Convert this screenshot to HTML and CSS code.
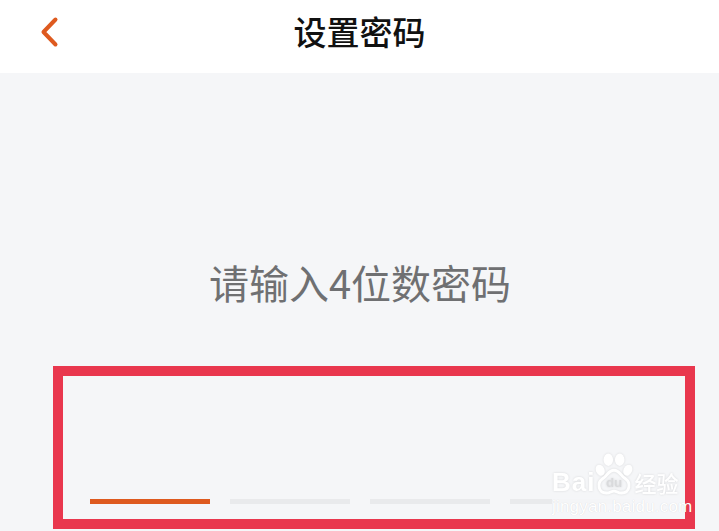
FILE: index.html
```html
<!DOCTYPE html>
<html lang="zh-CN">
<head>
    <meta charset="UTF-8">
    <meta name="viewport" content="width=device-width, initial-scale=1.0">
    <title>设置密码</title>
    <link rel="stylesheet" href="styles.css">
</head>
<body>
    <div class="header">
        <svg class="back" width="20" height="32" viewBox="0 0 20 32">
            <path d="M16.500 3.500 L4.500 16 L16.500 28.500" fill="none" stroke="#de5a1f" stroke-width="4" stroke-linecap="round" stroke-linejoin="round"/>
        </svg>
        <h1 class="title">设置密码</h1>
    </div>
    <div class="content">
        <div class="prompt">请输入4位数密码</div>
        <div class="bars">
            <div class="bar active"></div>
            <div class="bar"></div>
            <div class="bar"></div>
            <div class="bar"></div>
        </div>
    </div>
    <div class="red-box"></div>
    <div class="watermark">
        <div class="wm-logo">
            <span class="wm-bai">Bai</span>
            <svg class="wm-paw" width="38" height="42" viewBox="0 0 40 44">
                <g fill="#fff">
                    <ellipse cx="5.500" cy="18" rx="4.500" ry="6" transform="rotate(-25 5.500 18)"/>
                    <ellipse cx="14" cy="7" rx="5" ry="6.500"/>
                    <ellipse cx="26" cy="7" rx="5" ry="6.500"/>
                    <ellipse cx="34.500" cy="18" rx="4.500" ry="6" transform="rotate(25 34.500 18)"/>
                </g>
                <path d="M20 18 C14 18 13 24 8 27 C2 31 3 42 12 42 C16 42 17 40 20 40 C23 40 24 42 28 42 C37 42 38 31 32 27 C27 24 26 18 20 18 Z" fill="none" stroke="#fff" stroke-width="3"/>
                <text class="wm-du" x="20" y="36" text-anchor="middle">du</text>
            </svg>
            <span class="wm-cn">经验</span>
        </div>
        <div class="wm-url">jingyan.baidu.com</div>
    </div>
</body>
</html>
```

FILE: styles.css
```css
* {
    margin: 0;
    padding: 0;
    box-sizing: border-box;
}
html, body {
    height: 531px;
    overflow: hidden;
}
body {
    position: relative;
    background-color: #f5f6f8;
    font-family: "Noto Sans CJK SC", "Liberation Sans", sans-serif;
}
.header {
    height: 73px;
    background-color: #fff;
    display: flex;
    justify-content: center;
    align-items: center;
    position: relative;
}
.back {
    position: absolute;
    left: 39px;
    top: 16px;
}
.title {
    font-size: 33px;
    font-weight: 500;
    line-height: 40px;
    color: #111;
    margin-top: -12px;
}
.content {
    padding: 0 89px 0 90px;
}
.prompt {
    margin-top: 180px;
    font-size: 40px;
    line-height: 58px;
    font-weight: 400;
    color: #6f7072;
    text-align: center;
}
.bars {
    display: flex;
    gap: 20px;
    margin-top: 188px;
}
.bar {
    width: 120px;
    height: 5px;
    background-color: #e9eaec;
}
.bar.active {
    background-color: #de5a1f;
}
.red-box {
    position: absolute;
    left: 53px;
    top: 366px;
    width: 642px;
    height: 163px;
    border: 10px solid #e9374e;
}
.watermark {
    position: absolute;
    left: 552px;
    top: 453px;
    width: 128px;
    color: #fff;
}
.wm-logo {
    display: flex;
    align-items: flex-end;
    height: 42px;
    filter: drop-shadow(0 0 1px rgba(0, 0, 0, 0.12));
}
.wm-bai {
    font-family: "Liberation Sans", sans-serif;
    font-weight: 700;
    font-size: 26px;
    line-height: 26px;
    letter-spacing: 1px;
}
.wm-paw {
    flex: none;
}
.wm-du {
    font-family: "Liberation Sans", sans-serif;
    font-size: 14px;
    font-weight: 700;
    fill: #d9dadc;
}
.wm-cn {
    font-size: 22px;
    line-height: 26px;
    font-weight: 500;
    margin-left: 1px;
    white-space: nowrap;
}
.wm-url {
    font-family: "Liberation Sans", sans-serif;
    font-size: 17px;
    line-height: 18px;
    letter-spacing: 0.2px;
    white-space: nowrap;
    margin-top: 3px;
    background-color: rgba(245, 246, 248, 0.9);
    text-shadow: 0 0 1px rgba(0, 0, 0, 0.15);
}
```
